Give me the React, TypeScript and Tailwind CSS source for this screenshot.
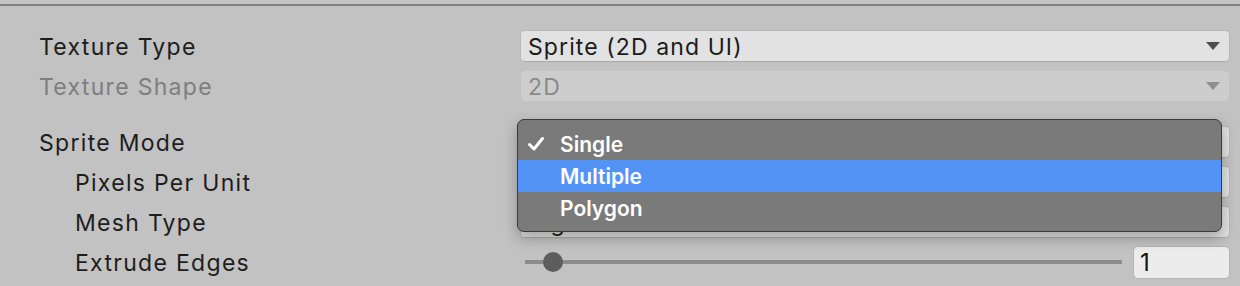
const font = { fontFamily: 'Inter, "Noto Sans", sans-serif' };

function Caret({ disabled = false }: { disabled?: boolean }) {
  return (
    <svg width="14" height="8" viewBox="0 0 14 8" className="shrink-0">
      <path d="M0 0 H14 L7 8 Z" fill={disabled ? '#8f8f8f' : '#4f4f4f'} />
    </svg>
  );
}

function Field({
  text,
  disabled = false,
  caret = true,
}: {
  text?: string;
  disabled?: boolean;
  caret?: boolean;
}) {
  return (
    <div
      className={`flex-1 h-[32px] flex items-center justify-between pl-[7px] pr-[9px] rounded-[5px] border ${
        disabled
          ? 'bg-[#cdcdcd] border-[#c2c2c2] text-[#8a8a8a]'
          : 'bg-[#e2e2e2] border-[#b9b9b9] border-b-[#a9a9a9] text-[#1b1b1b]'
      } text-[23px] tracking-[1.1px] leading-none`}
    >
      <span className="pt-[2px]">{text}</span>
      {caret && <Caret disabled={disabled} />}
    </div>
  );
}

function Row({
  label,
  indent = false,
  disabled = false,
  children,
}: {
  label: string;
  indent?: boolean;
  disabled?: boolean;
  children: React.ReactNode;
}) {
  return (
    <div className="relative flex items-center h-[40px]">
      <div
        className={`w-[481px] shrink-0 pt-[2px] text-[23px] tracking-[1.3px] leading-none ${
          indent ? 'pl-[36px]' : ''
        } ${disabled ? 'text-[#7e7e7e]' : 'text-[#1d1d1d]'}`}
      >
        {label}
      </div>
      {children}
    </div>
  );
}

const options = ['Single', 'Multiple', 'Polygon'];

export default function App() {
  const selected = 'Single';
  const hovered = 'Multiple';

  return (
    <div className="w-[1240px] h-[286px] overflow-hidden bg-[#c2c2c2]" style={font}>
      <div className="h-[4px] bg-[#c4c4c4]" />
      <div className="h-[2px] bg-[#808080]" />
      <div className="pl-[39px] pr-[10px] pt-[20px]">
        <Row label="Texture Type">
          <Field text="Sprite (2D and UI)" />
        </Row>
        <Row label="Texture Shape" disabled>
          <Field text="2D" disabled />
        </Row>
        <div className="h-[16px]" />
        <Row label="Sprite Mode">
          <Field />
          <div className="absolute left-[478px] top-[-3px] w-[705px] z-10 rounded-[7px] border border-[#3b3b3b] bg-[#7a7a7a] pt-[8px] pb-[7px] shadow-[0_6px_14px_rgba(0,0,0,0.28)]">
            {options.map((o) => (
              <div
                key={o}
                className={`relative h-[32px] flex items-center pl-[42px] text-white text-[21px] font-semibold leading-none ${
                  o === hovered ? 'bg-[#5393f6]' : ''
                }`}
              >
                {o === selected && (
                  <svg
                    width="18"
                    height="16"
                    viewBox="0 0 18 16"
                    className="absolute left-[9px] top-[8px]"
                  >
                    <path
                      d="M2.5 8.5 L7 13 L15.5 2.5"
                      fill="none"
                      stroke="#fff"
                      strokeWidth="3"
                      strokeLinecap="round"
                      strokeLinejoin="round"
                    />
                  </svg>
                )}
                {o}
              </div>
            ))}
          </div>
        </Row>
        <Row label="Pixels Per Unit" indent>
          <Field caret={false} />
        </Row>
        <Row label="Mesh Type" indent>
          <Field text="Tight" />
        </Row>
        <Row label="Extrude Edges" indent>
          <div className="flex-1 flex items-center gap-[11px]">
            <div className="relative flex-1 h-[20px] flex items-center pl-[5px]">
              <div className="flex-1 h-[4px] bg-[#8b8b8b]" />
              <div className="absolute left-[23px] top-0 w-[20px] h-[20px] rounded-full bg-[#5d5d5d]" />
            </div>
            <div className="w-[97px] h-[33px] flex items-center pl-[6px] pt-[2px] rounded-[5px] border border-[#b4b4b4] bg-[#ececec] text-[24px] text-[#111] leading-none">
              1
            </div>
          </div>
        </Row>
        <Row label="" indent>
          <Field caret={false} />
        </Row>
      </div>
    </div>
  );
}
